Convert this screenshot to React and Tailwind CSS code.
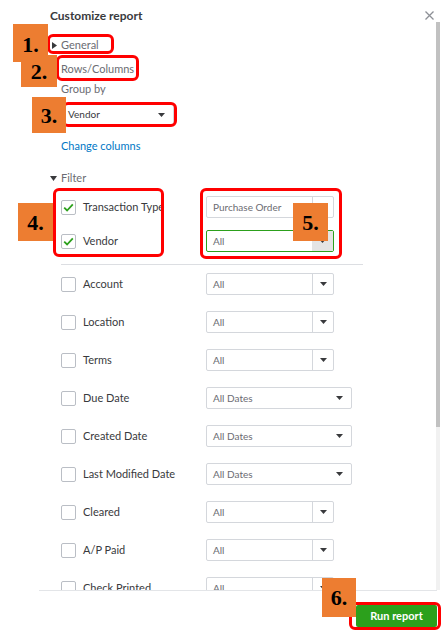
import React from "react";

const Caret = ({ className = "" }) => (
  <svg width="7" height="4" viewBox="0 0 7 4" className={className}>
    <path d="M0 0h7L3.5 4z" fill="#393a3d" />
  </svg>
);

const Check = () => (
  <svg width="11" height="9" viewBox="0 0 11 9">
    <path d="M1.2 4.6l2.9 2.9L9.8 1.4" fill="none" stroke="#2ca01c" strokeWidth="1.8" />
  </svg>
);

const Checkbox = ({ checked }) => (
  <div className="w-[15px] h-[15px] border border-[#babec5] rounded-[2px] bg-white flex items-center justify-center shrink-0">
    {checked && <Check />}
  </div>
);

// select with divider (combo style)
const Combo = ({ value, green }) => (
  <div
    className={`w-[128px] h-[22px] flex items-stretch bg-white rounded-[2px] border ${
      green ? "border-[#2ca01c]" : "border-[#d4d7dc]"
    }`}
  >
    <div className="flex-1 flex items-center pl-[6px] text-[10px] text-[#6b6c72]">{value}</div>
    <div
      className={`w-[21px] flex items-center justify-center ${
        green ? "bg-[#e4e4e4]" : "border-l border-[#d4d7dc]"
      }`}
    >
      <Caret />
    </div>
  </div>
);

const DateSelect = () => (
  <div className="w-[146px] h-[22px] flex items-center justify-between pl-[6px] pr-[8px] bg-white rounded-[2px] border border-[#d4d7dc] text-[10px] text-[#6b6c72]">
    All Dates
    <Caret />
  </div>
);

const FilterRow = ({ label, checked, children }) => (
  <div className="flex items-center h-[22px]">
    <div className="w-[156px] flex items-center gap-[7px] pl-[11px]">
      <Checkbox checked={checked} />
      <span className="text-[11px] text-[#393a3d] whitespace-nowrap">{label}</span>
    </div>
    {children}
  </div>
);

const Badge = ({ n, className }) => (
  <div
    className={`absolute bg-[#ed7d31] flex items-center justify-center text-[22px] font-bold text-black ${className}`}
    style={{ fontFamily: '"Liberation Serif", serif' }}
  >
    {n}
  </div>
);

const Ring = ({ className }) => (
  <div className={`absolute border-[3px] border-[#ff0000] rounded-[6px] ${className}`} />
);

const rows = [
  { label: "Account" },
  { label: "Location" },
  { label: "Terms" },
  { label: "Due Date", date: true },
  { label: "Created Date", date: true },
  { label: "Last Modified Date", date: true },
  { label: "Cleared" },
  { label: "A/P Paid" },
  { label: "Check Printed" },
];

export default function App() {
  return (
    <div
      className="relative w-[447px] h-[639px] bg-white overflow-hidden"
      style={{ fontFamily: 'Lato, "Open Sans", sans-serif' }}
    >
      {/* body + scrollbar */}
      <div className="flex h-[590px]">
        <div className="w-[436px] overflow-hidden pl-[50px] pt-[8px]">
          {/* header */}
          <div className="flex items-start justify-between h-[16px]">
            <span className="text-[12px] leading-[16px] font-bold text-[#393a3d]">Customize report</span>
            <svg width="9" height="9" viewBox="0 0 9 9" className="mt-[3px] mr-[2px]">
              <path d="M0.5 0.5l8 8M8.5 0.5l-8 8" stroke="#8d9096" strokeWidth="1.3" />
            </svg>
          </div>

          <div className="mt-[13px] flex items-center h-[16px]">
            <svg width="5" height="7" viewBox="0 0 5 7" className="ml-[2px] mr-[4px]">
              <path d="M0 0l5 3.5L0 7z" fill="#393a3d" />
            </svg>
            <span className="text-[11px] text-[#6b6c72]">General</span>
          </div>
          <div className="mt-[8px] h-[16px] pl-[11px] text-[11px] leading-[16px] text-[#6b6c72]">
            Rows/Columns
          </div>
          <div className="mt-[4px] h-[16px] pl-[11px] text-[11px] leading-[16px] text-[#6b6c72]">Group by</div>
          <div className="mt-[7px] ml-[12px] w-[112px] h-[21px] flex items-center justify-between pl-[5px] pr-[8px] border border-[#d4d7dc] rounded-[2px] text-[10px] text-[#393a3d]">
            Vendor
            <Caret />
          </div>
          <div className="mt-[13px] h-[16px] pl-[11px] text-[11px] leading-[16px] text-[#0077c5]">
            Change columns
          </div>

          <div className="mt-[16px] flex items-center h-[16px]">
            <svg width="7" height="5" viewBox="0 0 7 5" className="mr-[4px]">
              <path d="M0 0h7L3.5 5z" fill="#393a3d" />
            </svg>
            <span className="text-[11px] text-[#6b6c72]">Filter</span>
          </div>

          <div className="mt-[10px]">
            <FilterRow label="Transaction Type" checked>
              <Combo value="Purchase Order" />
            </FilterRow>
          </div>
          <div className="mt-[12px]">
            <FilterRow label="Vendor" checked>
              <Combo value="All" green />
            </FilterRow>
          </div>
          <div className="mt-[12px] ml-[11px] w-[302px] h-px bg-[#dcdee2]" />

          <div className="mt-[8px] flex flex-col gap-[16px]">
            {rows.map((r) => (
              <FilterRow key={r.label} label={r.label}>
                {r.date ? <DateSelect /> : <Combo value="All" />}
              </FilterRow>
            ))}
          </div>
        </div>

        {/* scrollbar */}
        <div className="w-[4px] pt-[22px] flex flex-col">
          <div className="h-[405px] bg-[#c1c1c1]" />
          <div className="flex-1 bg-[#f1f1f1]" />
        </div>
      </div>

      {/* footer */}
      <div className="ml-[39px] w-[398px] border-t border-[#e3e5e8] flex justify-end pt-[14px]">
        <button className="w-[81px] h-[22px] bg-[#2ca01c] rounded-[2px] text-white text-[11px] font-bold">
          Run report
        </button>
      </div>

      {/* annotations */}
      <Ring className="left-[47px] top-[34px] w-[67px] h-[20px]" />
      <Ring className="left-[56px] top-[55px] w-[83px] h-[26px]" />
      <Ring className="left-[62px] top-[102px] w-[115px] h-[25px]" />
      <Ring className="left-[53px] top-[188px] w-[111px] h-[69px]" />
      <Ring className="left-[200px] top-[188px] w-[142px] h-[71px]" />
      <Ring className="left-[349px] top-[602px] w-[92px] h-[28px]" />

      <Badge n="1." className="left-[13px] top-[24px] w-[35px] h-[38px] items-start pt-[4px]" />
      <Badge n="2." className="left-[21px] top-[55px] w-[36px] h-[32px]" />
      <Badge n="3." className="left-[32px] top-[97px] w-[34px] h-[36px]" />
      <Badge n="4." className="left-[18px] top-[203px] w-[35px] h-[38px]" />
      <Badge n="5." className="left-[293px] top-[203px] w-[35px] h-[38px]" />
      <Badge n="6." className="left-[322px] top-[578px] w-[34px] h-[39px]" />
    </div>
  );
}
